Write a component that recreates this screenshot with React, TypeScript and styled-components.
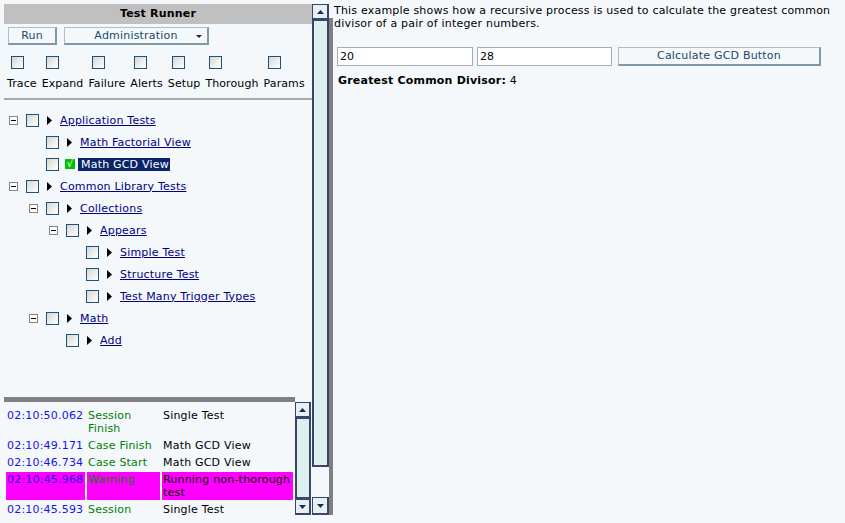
import React from 'react'
import styled, { createGlobalStyle } from 'styled-components'

// ─── Global ───────────────────────────────────────────────────────────────────

const GlobalStyle = createGlobalStyle`
    html, body {
        margin: 0;
        padding: 0;
        background: #f4f8fb;
    }
    * {
        box-sizing: border-box;
    }
`

// ─── Layout ───────────────────────────────────────────────────────────────────

const Page = styled.div`
    display: flex;
    height: 100vh;
    padding: 4px 0 8px 4px;
    font-family: 'DejaVu Sans', Verdana, sans-serif;
    font-size: 11px;
    letter-spacing: 0.2px;
    color: #000;
    background: #f4f8fb;
`

const LeftPane = styled.div`
    display: flex;
    flex-direction: column;
    width: 308px;
    flex-shrink: 0;
`

const Header = styled.div`
    height: 20px;
    line-height: 20px;
    background: #c0c0c0;
    text-align: center;
    font-weight: bold;
`

const Toolbar = styled.div`
    display: flex;
    gap: 7px;
    margin-top: 3px;
    padding-left: 4px;
`

const FlatButton = styled.button<{ $w: number }>`
    position: relative;
    width: ${p => p.$w}px;
    height: 18px;
    padding: 0;
    background: #f4f8fb;
    border-style: solid;
    border-width: 1px 2px 2px 1px;
    border-color: #a9bfca #7b99a8 #7b99a8 #a9bfca;
    color: #1a4866;
    font-family: inherit;
    font-size: 11px;
    letter-spacing: 0.2px;
    line-height: 14px;
    text-align: center;
`

const DropArrow = styled.span`
    position: absolute;
    right: 5px;
    top: 7px;
    width: 0;
    height: 0;
    border-left: 3px solid transparent;
    border-right: 3px solid transparent;
    border-top: 3px solid #1a2a3a;
`

const Options = styled.div`
    display: flex;
    gap: 5px;
    margin-top: 11px;
    padding-left: 3px;
    letter-spacing: 0.1px;
`

const OptionCol = styled.div`
    display: flex;
    flex-direction: column;
    align-items: flex-start;
`

const OptionLabel = styled.span`
    margin-top: 8px;
    line-height: 13px;
`

const Box = styled.span<{ $ml?: number }>`
    display: inline-block;
    flex-shrink: 0;
    width: 13px;
    height: 13px;
    margin-left: ${p => p.$ml ?? 0}px;
    border: 1px solid #1c5180;
    background: linear-gradient(135deg, #d6d6d0 0%, #f0f0ec 60%, #fdfdfb 100%);
`

const Separator = styled.div`
    margin-top: 8px;
    height: 2px;
    background: #a8a8a8;
`

const Tree = styled.div`
    flex: 1;
    padding-top: 9px;
`

const TreeRow = styled.div<{ $level: number }>`
    display: flex;
    align-items: center;
    height: 22px;
    padding-left: ${p => 5 + p.$level * 20}px;
`

const Expander = styled.span<{ $hidden?: boolean }>`
    position: relative;
    flex-shrink: 0;
    width: 9px;
    height: 9px;
    margin-right: 8px;
    border: 1px solid ${p => (p.$hidden ? 'transparent' : '#848484')};
    background: ${p => (p.$hidden ? 'transparent' : '#fff')};

    &::after {
        content: '';
        display: ${p => (p.$hidden ? 'none' : 'block')};
        position: absolute;
        left: 1px;
        top: 3px;
        width: 5px;
        height: 1px;
        background: #000;
    }
`

const Arrow = styled.svg`
    flex-shrink: 0;
    margin: 0 8px;
`

const TreeLink = styled.a`
    color: #000080;
    text-decoration: underline;
    line-height: 13px;
`

const PassMark = styled.span`
    flex-shrink: 0;
    width: 10px;
    height: 10px;
    margin: 0 3px 0 6px;
    background: #00c000;
    color: #fff;
    font-size: 10px;
    line-height: 10px;
    text-align: center;
    letter-spacing: 0;
`

const Selected = styled.span`
    background: #0a246a;
    color: #fff;
    padding: 0 1px 0 3px;
    line-height: 13px;
`

// ─── Log ──────────────────────────────────────────────────────────────────────

const LogSection = styled.div`
    display: flex;
    height: 118px;
`

const LogMain = styled.div`
    display: flex;
    flex-direction: column;
    width: 291px;
    overflow: hidden;
`

const LogDivider = styled.div`
    height: 5px;
    flex-shrink: 0;
    background: #808080;
`

const LogTable = styled.table`
    border-spacing: 2px;
    margin-top: 4px;
    table-layout: fixed;
    width: 291px;
    font-size: 11px;
    line-height: 13px;
`

const LogCell = styled.td<{ $kind: 'time' | 'event' | 'text'; $warn?: boolean }>`
    padding: 1px;
    vertical-align: top;
    background: ${p => (p.$warn ? '#ff00ff' : 'transparent')};
    color: ${p => (p.$kind === 'time' ? '#1414e6' : p.$kind === 'event' ? '#008000' : '#000')};
`

// ─── Scrollbars ───────────────────────────────────────────────────────────────

const ScrollBar = styled.div<{ $w: number; $top?: number }>`
    display: flex;
    flex-direction: column;
    width: ${p => p.$w}px;
    margin-top: ${p => p.$top ?? 0}px;
    flex-shrink: 0;
`

const ScrollButton = styled.div<{ $h: number }>`
    display: flex;
    align-items: center;
    justify-content: center;
    height: ${p => p.$h}px;
    flex-shrink: 0;
    background: #e6f0f2;
    border: 1px solid #3a4668;
    border-width: 1px 2px 2px 1px;
`

const Thumb = styled.div<{ $h?: number }>`
    ${p => (p.$h ? `height: ${p.$h}px; flex-shrink: 0;` : 'flex: 1;')}
    background: #deefef;
    border: 1px solid #3a4668;
    border-width: 1px 2px 2px 2px;
`

const Track = styled.div`
    flex: 1;
    background: #f4f8fc;
`

const Splitter = styled.div`
    width: 4px;
    margin-top: 14px;
    background: #808080;
    flex-shrink: 0;
`

// ─── Right pane ───────────────────────────────────────────────────────────────

const RightPane = styled.div`
    flex: 1;
    padding-left: 1px;
    padding-right: 8px;
`

const Intro = styled.p`
    margin: 0;
    line-height: 13px;
`

const FormRow = styled.div`
    display: flex;
    align-items: center;
    margin-top: 17px;
    padding-left: 3px;
`

const NumberInput = styled.input<{ $w: number; $mr: number }>`
    width: ${p => p.$w}px;
    height: 19px;
    margin: 0 ${p => p.$mr}px 0 0;
    padding: 1px 2px;
    border: 1px solid #a5acb2;
    background: #fff;
    font-family: inherit;
    font-size: 11px;
    color: #000;
`

const Result = styled.div`
    margin-top: 8px;
    padding-left: 4px;
    line-height: 13px;
`

// ─── Data ─────────────────────────────────────────────────────────────────────

const options = ['Trace', 'Expand', 'Failure', 'Alerts', 'Setup', 'Thorough', 'Params']

type Node = { label: string; level: number; expander: boolean; passed?: boolean }

const tree: Node[] = [
    { label: 'Application Tests', level: 0, expander: true },
    { label: 'Math Factorial View', level: 1, expander: false },
    { label: 'Math GCD View', level: 1, expander: false, passed: true },
    { label: 'Common Library Tests', level: 0, expander: true },
    { label: 'Collections', level: 1, expander: true },
    { label: 'Appears', level: 2, expander: true },
    { label: 'Simple Test', level: 3, expander: false },
    { label: 'Structure Test', level: 3, expander: false },
    { label: 'Test Many Trigger Types', level: 3, expander: false },
    { label: 'Math', level: 1, expander: true },
    { label: 'Add', level: 2, expander: false },
]

const log = [
    { time: '02:10:50.062', event: 'Session Finish', text: 'Single Test' },
    { time: '02:10:49.171', event: 'Case Finish', text: 'Math GCD View' },
    { time: '02:10:46.734', event: 'Case Start', text: 'Math GCD View' },
    { time: '02:10:45.968', event: 'Warning', text: 'Running non-thorough test', warn: true },
    { time: '02:10:45.593', event: 'Session', text: 'Single Test' },
]

// ─── Component ────────────────────────────────────────────────────────────────

function ArrowGlyph({ dir }: { dir: 'up' | 'down' }) {
    return (
        <svg width="7" height="4" viewBox="0 0 7 4">
            <polygon points={dir === 'up' ? '0,4 7,4 3.5,0' : '0,0 7,0 3.5,4'} fill="#1e2a55" />
        </svg>
    )
}

export default function App() {
    return (
        <>
            <GlobalStyle />
            <Page>
                <LeftPane>
                    <Header>Test Runner</Header>
                    <Toolbar>
                        <FlatButton $w={49}>Run</FlatButton>
                        <FlatButton $w={145}>
                            Administration
                            <DropArrow />
                        </FlatButton>
                    </Toolbar>
                    <Options>
                        {options.map(o => (
                            <OptionCol key={o}>
                                <Box $ml={4} />
                                <OptionLabel>{o}</OptionLabel>
                            </OptionCol>
                        ))}
                    </Options>
                    <Separator />
                    <Tree>
                        {tree.map(n => (
                            <TreeRow key={n.label} $level={n.level}>
                                <Expander $hidden={!n.expander} />
                                <Box />
                                {n.passed ? (
                                    <>
                                        <PassMark>√</PassMark>
                                        <Selected>{n.label}</Selected>
                                    </>
                                ) : (
                                    <>
                                        <Arrow width="5" height="9" viewBox="0 0 5 9">
                                            <polygon points="0,0 5,4.5 0,9" fill="#000" />
                                        </Arrow>
                                        <TreeLink href="#">{n.label}</TreeLink>
                                    </>
                                )}
                            </TreeRow>
                        ))}
                    </Tree>
                    <LogSection>
                        <LogMain>
                            <LogDivider />
                            <LogTable>
                                <colgroup>
                                    <col style={{ width: 79 }} />
                                    <col style={{ width: 73 }} />
                                    <col style={{ width: 131 }} />
                                </colgroup>
                                <tbody>
                                    {log.map(r => (
                                        <tr key={r.time}>
                                            <LogCell $kind="time" $warn={r.warn}>{r.time}</LogCell>
                                            <LogCell $kind="event" $warn={r.warn}>{r.event}</LogCell>
                                            <LogCell $kind="text" $warn={r.warn}>{r.text}</LogCell>
                                        </tr>
                                    ))}
                                </tbody>
                            </LogTable>
                        </LogMain>
                        <ScrollBar $w={16} $top={5}>
                            <ScrollButton $h={16}><ArrowGlyph dir="up" /></ScrollButton>
                            <Thumb />
                            <ScrollButton $h={16}><ArrowGlyph dir="down" /></ScrollButton>
                        </ScrollBar>
                    </LogSection>
                </LeftPane>
                <ScrollBar $w={17}>
                    <ScrollButton $h={16}><ArrowGlyph dir="up" /></ScrollButton>
                    <Thumb $h={447} />
                    <Track />
                    <ScrollButton $h={18}><ArrowGlyph dir="down" /></ScrollButton>
                </ScrollBar>
                <Splitter />
                <RightPane>
                    <Intro>
                        This example shows how a recursive process is used to calculate the greatest common
                        divisor of a pair of integer numbers.
                    </Intro>
                    <FormRow>
                        <NumberInput $w={136} $mr={4} defaultValue="20" />
                        <NumberInput $w={135} $mr={6} defaultValue="28" />
                        <FlatButton $w={203} style={{ height: 19 }}>Calculate GCD Button</FlatButton>
                    </FormRow>
                    <Result>
                        <b>Greatest Common Divisor:</b> 4
                    </Result>
                </RightPane>
            </Page>
        </>
    )
}
